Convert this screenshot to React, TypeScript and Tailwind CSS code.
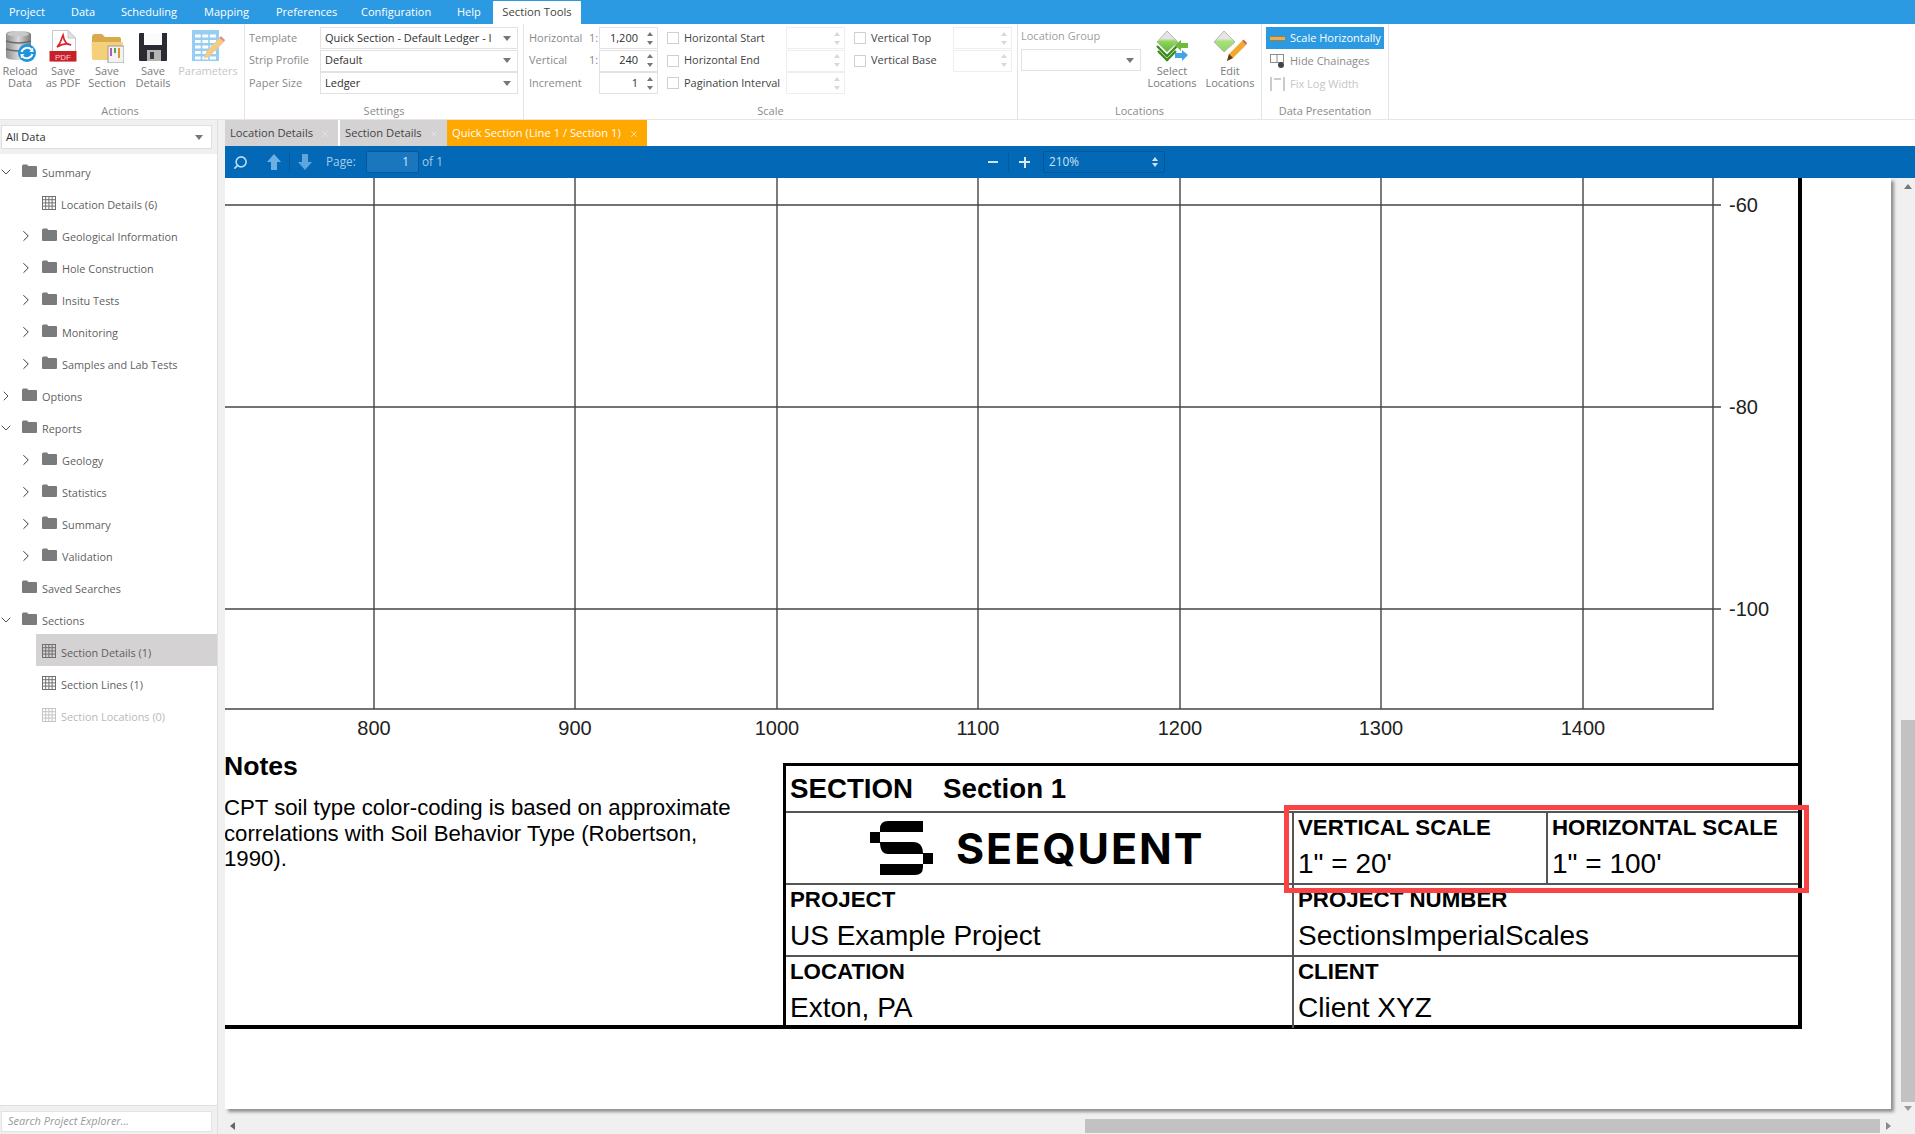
import { ChevronDown, ChevronRight, Search, X } from 'lucide-react'

type TreeItem = {
  label: string
  level: 0 | 1
  open?: boolean
  icon: 'folder' | 'grid'
  selected?: boolean
  dim?: boolean
}

const menu = [
  { label: 'Project', w: 'w-[62px]' },
  { label: 'Data', w: 'w-[50px]' },
  { label: 'Scheduling', w: 'w-[83px]' },
  { label: 'Mapping', w: 'w-[72px]' },
  { label: 'Preferences', w: 'w-[85px]' },
  { label: 'Configuration', w: 'w-[96px]' },
  { label: 'Help', w: 'w-[36px]' },
]

const tree: TreeItem[] = [
  { label: 'Summary', level: 0, open: true, icon: 'folder' },
  { label: 'Location Details (6)', level: 1, icon: 'grid' },
  { label: 'Geological Information', level: 1, open: false, icon: 'folder' },
  { label: 'Hole Construction', level: 1, open: false, icon: 'folder' },
  { label: 'Insitu Tests', level: 1, open: false, icon: 'folder' },
  { label: 'Monitoring', level: 1, open: false, icon: 'folder' },
  { label: 'Samples and Lab Tests', level: 1, open: false, icon: 'folder' },
  { label: 'Options', level: 0, open: false, icon: 'folder' },
  { label: 'Reports', level: 0, open: true, icon: 'folder' },
  { label: 'Geology', level: 1, open: false, icon: 'folder' },
  { label: 'Statistics', level: 1, open: false, icon: 'folder' },
  { label: 'Summary', level: 1, open: false, icon: 'folder' },
  { label: 'Validation', level: 1, open: false, icon: 'folder' },
  { label: 'Saved Searches', level: 0, icon: 'folder' },
  { label: 'Sections', level: 0, open: true, icon: 'folder' },
  { label: 'Section Details (1)', level: 1, icon: 'grid', selected: true },
  { label: 'Section Lines (1)', level: 1, icon: 'grid' },
  { label: 'Section Locations (0)', level: 1, icon: 'grid', dim: true },
]

function FolderIcon() {
  return (
    <svg width="15" height="13" viewBox="0 0 15 13" className="shrink-0 mt-px">
      <path d="M0 2 Q0 0.5 1.5 0.5 H5 L6.5 2 H14 Q15 2 15 3 V12 Q15 13 14 13 H1 Q0 13 0 12 Z" fill="#7b7b7b" />
    </svg>
  )
}

function GridIcon({ dim }: { dim?: boolean }) {
  const c = dim ? '#c4c4c4' : '#6f6f6f'
  return (
    <svg width="14" height="14" viewBox="0 0 14 14" className="shrink-0 mt-px" fill="none" stroke={c} strokeWidth="1">
      <rect x="0.5" y="0.5" width="13" height="13" />
      <path d="M0 3.7H14M0 6.9H14M0 10.1H14M3.7 0V14M6.9 0V14M10.1 0V14" />
    </svg>
  )
}

function ReloadIcon() {
  return (
    <svg width="31" height="32" viewBox="0 0 31 32">
      <defs>
        <linearGradient id="dbg" x1="0" x2="1" y1="0" y2="0">
          <stop offset="0" stopColor="#8d8d8d" />
          <stop offset="0.5" stopColor="#d9d9d9" />
          <stop offset="1" stopColor="#7a7a7a" />
        </linearGradient>
      </defs>
      <path d="M1 4 Q1 1 12 1 Q25 1 26 4 V27 Q25 30 13 30 Q1 30 1 27 Z" fill="url(#dbg)" />
      <path d="M1 11 Q13 15 26 11 M1 19 Q13 23 26 19" stroke="#6a6a6a" strokeWidth="1.4" fill="none" />
      <ellipse cx="13" cy="4" rx="11" ry="2.4" fill="#c9c9c9" />
      <circle cx="22" cy="23" r="9" fill="#1b93df" />
      <path d="M16.5 22 A6 6 0 0 1 26.5 19.5 M27.5 24 A6 6 0 0 1 17.5 26.5" stroke="#fff" strokeWidth="2" fill="none" />
      <path d="M24.5 22 L28.5 22 L28 17.5 Z M19.5 24 L15.5 24 L16 28.5 Z" fill="#fff" />
    </svg>
  )
}

function PdfIcon() {
  return (
    <svg width="28" height="32" viewBox="0 0 28 32">
      <path d="M3.5 0.5 H19 L26.5 8 V31 H3.5 Z" fill="#fff" stroke="#c8c8c8" />
      <path d="M19 0.5 V8 H26.5 Z" fill="#e2e2e2" stroke="#c8c8c8" />
      <path d="M14 5 C12 9 13 12 8 17 C13 14 18 13 22 15 C18 15 15 11 14 5 Z" fill="none" stroke="#d8232a" strokeWidth="1.6" />
      <rect x="0.5" y="21" width="27" height="10.5" fill="#c9202a" />
      <text x="14" y="29.5" textAnchor="middle" fontSize="8" fill="#f5d5d5" fontFamily="Liberation Sans, sans-serif">PDF</text>
    </svg>
  )
}

function SectionIcon() {
  return (
    <svg width="33" height="30" viewBox="0 0 33 30" className="mt-[3px]">
      <path d="M1 4 Q1 1 4 1 H11 L14 4 H28 Q30 4 30 6 V10 H1 Z" fill="#d9a94e" />
      <path d="M0.5 9 H32 L30 26 Q30 27 28 27 H3 Q1 27 1 26 Z" fill="#f6cf7a" />
      <rect x="17" y="13" width="16" height="17" fill="#f2f2f2" stroke="#9a9a9a" />
      <path d="M20 15 V23" stroke="#b15bb0" strokeWidth="2" />
      <path d="M24 15 V20" stroke="#59a14f" strokeWidth="2" />
      <path d="M28 15 V25" stroke="#d49a2c" strokeWidth="2" />
    </svg>
  )
}

function FloppyIcon() {
  return (
    <svg width="30" height="30" viewBox="0 0 30 30" className="mt-[2px]">
      <path d="M1 2 Q1 1 2 1 H29 V28 Q29 29 28 29 H2 Q1 29 1 28 Z" fill="#2b2b33" />
      <rect x="6" y="1" width="18" height="12" fill="#fbfbfb" />
      <rect x="9" y="18" width="14" height="11" fill="#b5b5b5" />
      <rect x="12" y="20" width="4" height="7" fill="#3a3a3a" />
    </svg>
  )
}

function ParametersIcon() {
  return (
    <svg width="33" height="32" viewBox="0 0 33 32" opacity="0.7">
      <rect x="0" y="0" width="27" height="31" fill="#69b9ee" />
      <path d="M3 6H24M3 11.5H24M3 17H24M3 22.5H24M3 28H24" stroke="#fff" strokeWidth="3" />
      <path d="M9.5 3V30M17 3V30" stroke="#69b9ee" strokeWidth="1.6" />
      <path d="M12 29 L14 22 L27 8 L32 12 L18 26 Z" fill="#f0b458" />
      <path d="M27 8 L29 6 L33 10 L32 12 Z" fill="#d06a4a" />
    </svg>
  )
}

function SelectLocationsIcon() {
  return (
    <svg width="33" height="32" viewBox="0 0 33 32">
      <defs>
        <linearGradient id="dia" x1="0" x2="0" y1="0" y2="1">
          <stop offset="0.35" stopColor="#e4e4e4" />
          <stop offset="0.5" stopColor="#8fd65a" />
          <stop offset="1" stopColor="#5cb82f" />
        </linearGradient>
      </defs>
      <path d="M11 1 L22 12 L11 22 L1 12 Z" fill="url(#dia)" stroke="#b8b8b8" />
      <path d="M1 16 L11 26 L21 16 M2 21 L11 30 L20 21" stroke="#3d8c1f" strokeWidth="2.4" fill="none" />
      <path d="M19 15 L25 10 V13 H32 V18 H25 V21 Z" fill="#6fbb3a" />
      <path d="M32 25 L26 20 V23 H19 V28 H26 V31 Z" fill="#3fa4e8" />
    </svg>
  )
}

function EditLocationsIcon() {
  return (
    <svg width="34" height="32" viewBox="0 0 34 32">
      <path d="M11 1 L22 12 L11 22 L1 12 Z" fill="url(#dia2)" stroke="#b8b8b8" />
      <defs>
        <linearGradient id="dia2" x1="0" x2="0" y1="0" y2="1">
          <stop offset="0.35" stopColor="#e6e6e6" />
          <stop offset="0.5" stopColor="#a8e07c" />
          <stop offset="1" stopColor="#8fd65a" />
        </linearGradient>
      </defs>
      <path d="M14 31 L16 24 L29 11 L33 15 L20 28 Z" fill="#f0a92f" />
      <path d="M14 31 L16 24 L20 28 Z" fill="#5a3d1c" />
      <path d="M29 11 L30.5 9.5 L34 13 L33 15 Z" fill="#d2604a" />
    </svg>
  )
}

function Caret({ light }: { light?: boolean }) {
  return (
    <span className={`w-0 h-0 border-x-[4px] border-x-transparent border-t-[5px] ${light ? 'border-t-[#c4c4c4]' : 'border-t-[#777777]'}`} />
  )
}

function RibbonButton({ icon, lines, w, dim }: { icon: React.ReactNode; lines: string[]; w: string; dim?: boolean }) {
  return (
    <div className={`${w} shrink-0 flex flex-col items-center pt-[6px] leading-[12px] ${dim ? 'text-[#c6c6c6]' : 'text-[#7a7a7a]'}`}>
      <div className="h-[35px] flex items-start justify-center">{icon}</div>
      {lines.map((l) => (
        <div key={l}>{l}</div>
      ))}
    </div>
  )
}

function Group({ w, label, labelClass, children }: { w: string; label: string; labelClass?: string; children: React.ReactNode }) {
  return (
    <div className={`${w} shrink-0 h-full flex flex-col border-r border-[#e3e3e3]`}>
      <div className="flex-1 min-h-0">{children}</div>
      <div className={`h-4 leading-4 text-center text-[#8a8a8a] ${labelClass ?? ''}`}>{label}</div>
    </div>
  )
}

function Combo({ text }: { text: string }) {
  return (
    <div className="h-[22px] w-[198px] flex items-center justify-between border border-[#e2e2e2] bg-white pl-1 pr-[6px] text-[#2f2f2f] font-medium">
      <span className="whitespace-nowrap">{text}</span>
      <Caret />
    </div>
  )
}

function Spinner({ value, disabled }: { value?: string; disabled?: boolean }) {
  return (
    <div className={`h-[22px] w-[59px] flex items-center justify-end border ${disabled ? 'border-[#eeeeee]' : 'border-[#e2e2e2]'} text-[#2f2f2f] font-medium`}>
      <span className="pr-[9px]">{value}</span>
      <span className="flex flex-col gap-[5px] pr-1">
        <span className={`w-0 h-0 border-x-[3px] border-x-transparent border-b-[4px] ${disabled ? 'border-b-[#d8d8d8]' : 'border-b-[#777777]'}`} />
        <span className={`w-0 h-0 border-x-[3px] border-x-transparent border-t-[4px] ${disabled ? 'border-t-[#d8d8d8]' : 'border-t-[#777777]'}`} />
      </span>
    </div>
  )
}

function Check({ label }: { label: string }) {
  return (
    <>
      <div className="flex justify-end items-center">
        <span className="w-3 h-3 border border-[#d0d0d0] bg-white" />
      </div>
      <div className="pl-[5px] text-[#444444] flex items-center">{label}</div>
    </>
  )
}

function Ribbon() {
  return (
    <div className="h-24 flex bg-white text-[11px] border-b border-[#e6e6e6]">
      <Group w="w-[245px]" label="Actions" labelClass="pr-1">
        <div className="flex">
          <RibbonButton w="w-[40px]" icon={<ReloadIcon />} lines={['Reload', 'Data']} />
          <RibbonButton w="w-[46px]" icon={<PdfIcon />} lines={['Save', 'as PDF']} />
          <RibbonButton w="w-[42px]" icon={<SectionIcon />} lines={['Save', 'Section']} />
          <RibbonButton w="w-[50px]" icon={<FloppyIcon />} lines={['Save', 'Details']} />
          <RibbonButton w="w-[60px]" icon={<ParametersIcon />} lines={['Parameters']} dim />
        </div>
      </Group>

      <Group w="w-[279px]" label="Settings">
        <div className="grid grid-cols-[71px_198px] auto-rows-[22px] gap-y-[0.5px] pt-[3px] pl-1 items-center text-[#8a8a8a]">
          <span>Template</span>
          <Combo text="Quick Section - Default Ledger - I" />
          <span>Strip Profile</span>
          <Combo text="Default" />
          <span>Paper Size</span>
          <Combo text="Ledger" />
        </div>
      </Group>

      <Group w="w-[494px]" label="Scale">
        <div className="grid grid-cols-[60px_10px_59px_21px_107px_59px_21px_87px_59px] auto-rows-[22px] gap-y-[0.5px] pt-[3px] pl-[5px] items-stretch text-[#8a8a8a]">
          <span className="flex items-center">Horizontal</span>
          <span className="flex items-center">1:</span>
          <Spinner value="1,200" />
          <Check label="Horizontal Start" />
          <Spinner disabled />
          <Check label="Vertical Top" />
          <Spinner disabled />

          <span className="flex items-center">Vertical</span>
          <span className="flex items-center">1:</span>
          <Spinner value="240" />
          <Check label="Horizontal End" />
          <Spinner disabled />
          <Check label="Vertical Base" />
          <Spinner disabled />

          <span className="flex items-center col-span-2">Increment</span>
          <Spinner value="1" />
          <Check label="Pagination Interval" />
          <Spinner disabled />
        </div>
      </Group>

      <Group w="w-[244px]" label="Locations">
        <div className="flex">
          <div className="w-[125px] pl-[3px] pt-[2px] shrink-0">
            <div className="h-[19px] leading-[19px] text-[#a0a0a0]">Location Group</div>
            <div className="mt-[4px] h-[22px] w-[120px] flex items-center justify-end pr-[6px] border border-[#e2e2e2]">
              <Caret />
            </div>
          </div>
          <RibbonButton w="w-[58px]" icon={<SelectLocationsIcon />} lines={['Select', 'Locations']} />
          <RibbonButton w="w-[58px]" icon={<EditLocationsIcon />} lines={['Edit', 'Locations']} />
        </div>
      </Group>

      <Group w="w-[127px]" label="Data Presentation">
        <div className="pl-1 pt-[3px]">
          <div className="w-[118px] h-[22px] flex items-center bg-[#2b9ae3] text-white pl-1 gap-[5px]">
            <span className="w-[15px] h-[5px] bg-[#e0b05c] border-y border-[#a87f35]" />
            <span>Scale Horizontally</span>
          </div>
          <div className="w-[118px] h-[22px] mt-px flex items-center text-[#8a8a8a] pl-1 gap-[5px]">
            <svg width="15" height="16" viewBox="0 0 15 16" fill="none" stroke="#8d8d8d">
              <rect x="0.5" y="1.5" width="13" height="8" />
              <path d="M7 1.5V9.5" />
              <circle cx="11" cy="12" r="3" fill="#444444" stroke="none" />
            </svg>
            <span>Hide Chainages</span>
          </div>
          <div className="w-[118px] h-[22px] mt-px flex items-center text-[#c6c6c6] pl-1 gap-[5px]">
            <svg width="15" height="16" viewBox="0 0 15 16" fill="none" stroke="#bcbcbc" strokeWidth="1.5">
              <path d="M1 1V15M14 1V15M4 3H11" />
            </svg>
            <span>Fix Log Width</span>
          </div>
        </div>
      </Group>
      <div className="flex-1" />
    </div>
  )
}

function Sidebar() {
  return (
    <div className="w-[225px] shrink-0 flex bg-[#f0f0f0]">
      <div className="w-[218px] flex flex-col border-r border-[#dedede] text-[10.9px]">
        <div className="h-[33px] shrink-0 pt-[5px] pl-[1px]">
          <div className="h-6 w-[211px] flex items-center justify-between bg-white border border-[#dfdfdf] pl-1 pr-2 text-[#2f2f2f] text-[11px] font-medium">
            <span>All Data</span>
            <Caret />
          </div>
        </div>
        <div className="flex-1 bg-white border-t border-[#f0f0f0]">
          {tree.map((t, i) => (
            <div key={i} className="h-8 flex items-center">
              <div className={`${t.level === 1 ? 'w-[36px] pl-[17px]' : 'w-[16px] -ml-[2px] mr-[2px]'} shrink-0 h-full flex items-center mt-[4px] text-[#333333]`}>
                {t.open === true && <ChevronDown size={18} strokeWidth={1.3} />}
                {t.open === false && <ChevronRight size={18} strokeWidth={1.3} />}
              </div>
              <div className={`flex-1 h-full flex items-center pl-[6px] gap-[5px] ${t.selected ? 'bg-[#d4d2d3]' : ''} ${t.dim ? 'text-[#b9b9b9]' : 'text-[#5f5f5f]'}`}>
                {t.icon === 'folder' ? <FolderIcon /> : <GridIcon dim={t.dim} />}
                <span className="mt-[6px]">{t.label}</span>
              </div>
            </div>
          ))}
        </div>
        <div className="h-[29px] shrink-0 border-t border-[#e0e0e0] pt-[5px] pl-[1px]">
          <div className="h-[21px] w-[211px] flex items-center bg-white border border-[#e3e3e3] pl-[6px] italic text-[#999999] text-[11px]">
            Search Project Explorer...
          </div>
        </div>
      </div>
    </div>
  )
}

function DocTab({ label, w, active }: { label: string; w: string; active?: boolean }) {
  return (
    <div className={`${w} h-full shrink-0 flex items-center justify-between pl-[5px] pr-[8px] pt-px ${active ? 'bg-[#ffa800] text-white' : 'bg-[#d4d2d3] text-[#444444]'}`}>
      <span>{label}</span>
      <X size={10} strokeWidth={1.5} className={active ? 'text-white' : 'text-[#eeeeee]'} />
    </div>
  )
}

function ArrowIcon({ down }: { down?: boolean }) {
  return (
    <svg width="14" height="16" viewBox="0 0 14 16" className={down ? 'rotate-180' : ''}>
      <path d="M7 0 L14 8 H10 V16 H4 V8 H0 Z" fill={down ? '#5fa6dc' : '#6cb0e2'} />
    </svg>
  )
}

function Toolbar() {
  return (
    <div className="h-8 shrink-0 flex items-center bg-[#0368b6] text-[11.8px] text-[#a6cdea]">
      <Search size={15} strokeWidth={2.6} className="ml-[8px] -scale-x-100 text-[#b7dcf5]" />
      <div className="ml-[19px]"><ArrowIcon /></div>
      <div className="ml-[8px] w-px h-5 bg-[#035a9e]" />
      <div className="ml-[8px]"><ArrowIcon down /></div>
      <span className="ml-[14px] w-[31px]">Page:</span>
      <div className="ml-[9px] w-[53px] h-[22px] flex items-center justify-end pr-[9px] bg-[#1a76bf] border border-[#04589a] rounded-[2px] text-[#d5e8f6]">1</div>
      <span className="ml-[3px] w-[22px] whitespace-nowrap">of 1</span>
      <span className="ml-[544px] w-[10px] h-[2px] bg-[#cfe3f2]" />
      <div className="ml-[10px] w-px h-5 bg-[#035a9e]" />
      <span className="ml-[10px] relative w-[11px] h-[11px] flex items-center justify-center">
        <span className="w-[11px] h-[2px] bg-[#d9eaf6]" />
        <span className="absolute w-[2px] h-[11px] bg-[#d9eaf6]" />
      </span>
      <div className="ml-[13px] w-[122px] h-[22px] flex items-center justify-between pl-[5px] pr-[6px] border border-[#04589a] rounded-[2px] text-[#cfe3f2]">
        <span>210%</span>
        <span className="flex flex-col gap-[2px]">
          <span className="w-0 h-0 border-x-[3px] border-x-transparent border-b-[4px] border-b-[#cfe3f2]" />
          <span className="w-0 h-0 border-x-[3px] border-x-transparent border-t-[4px] border-t-[#cfe3f2]" />
        </span>
      </div>
    </div>
  )
}

const xTicks = [
  { x: 149, label: '800' },
  { x: 350, label: '900' },
  { x: 552, label: '1000' },
  { x: 753, label: '1100' },
  { x: 955, label: '1200' },
  { x: 1156, label: '1300' },
  { x: 1358, label: '1400' },
]

const yTicks = [
  { y: 27, label: '-60' },
  { y: 229, label: '-80' },
  { y: 431, label: '-100' },
]

function Chart() {
  return (
    <svg width="1573" height="585" viewBox="0 0 1573 585" className="block shrink-0">
      {xTicks.map((t) => (
        <g key={t.label}>
          <line x1={t.x} x2={t.x} y1="0" y2="531" stroke="#444444" strokeWidth="1.4" />
          <text x={t.x} y="557" textAnchor="middle" fontSize="20" fill="#222222" fontFamily="Liberation Sans, sans-serif">{t.label}</text>
        </g>
      ))}
      <line x1="1488" x2="1488" y1="0" y2="532" stroke="#444444" strokeWidth="1.4" />
      <line x1="0" x2="1488" y1="531" y2="531" stroke="#444444" strokeWidth="1.4" />
      {yTicks.map((t) => (
        <g key={t.label}>
          <line x1="0" x2="1496" y1={t.y} y2={t.y} stroke="#444444" strokeWidth="1.4" />
          <text x="1504" y={t.y + 7} fontSize="20" fill="#222222" fontFamily="Liberation Sans, sans-serif">{t.label}</text>
        </g>
      ))}
    </svg>
  )
}

function Cell({ label, value, w }: { label: string; value: string; w: string }) {
  return (
    <div className={`${w} h-full pl-[4px] overflow-hidden`}>
      <div className="h-[29px] leading-[29px] text-[22.3px] font-bold">{label}</div>
      <div className="h-[43px] leading-[43px] text-[28px]">{value}</div>
    </div>
  )
}

function TitleBlock() {
  return (
    <div className="relative w-[1015px] h-full border-t-[3px] border-l-[3px] border-black text-black font-['Liberation_Sans',Arial,sans-serif]">
      <div className="h-[47px] flex items-center pl-[4px] border-b-2 border-[#555555] text-[27.7px] font-bold">
        <span>SECTION</span>
        <span className="ml-[30px]">Section 1</span>
      </div>
      <div className="h-[72px] flex border-b-2 border-[#555555]">
        <div className="w-[508px] h-full flex items-center border-r-2 border-[#555555] pl-[84px]">
          <svg width="63" height="54" viewBox="0 0 63 54" className="shrink-0">
            <path d="M10 12 V8 Q10 0 18 0 H53 V11 H10 Z" fill="#000" />
            <path d="M0 11 H10 V22 H0 Z" fill="#000" />
            <path d="M10 21 H43 Q53 21 53 33 H18 Q10 33 10 21 Z" fill="#000" />
            <path d="M53 32 H63 V43 H53 Z" fill="#000" />
            <path d="M10 43 H53 V46 Q53 54 45 54 H10 Z" fill="#000" />
          </svg>
          <span className="ml-[23px] text-[43px] leading-none font-bold tracking-[0.045em] font-['Inter',sans-serif]">SEEQUENT</span>
        </div>
        <div className="w-[254px] h-full border-r-2 border-[#555555]">
          <Cell label="VERTICAL SCALE" value={'1" = 20\''} w="w-full" />
        </div>
        <Cell label="HORIZONTAL SCALE" value={'1" = 100\''} w="flex-1" />
      </div>
      <div className="h-[72px] flex border-b-2 border-[#555555]">
        <div className="w-[508px] h-full border-r-2 border-[#555555]">
          <Cell label="PROJECT" value="US Example Project" w="w-full" />
        </div>
        <Cell label="PROJECT NUMBER" value="SectionsImperialScales" w="flex-1" />
      </div>
      <div className="h-[71px] flex">
        <div className="w-[508px] h-full border-r-2 border-[#555555]">
          <Cell label="LOCATION" value="Exton, PA" w="w-full" />
        </div>
        <Cell label="CLIENT" value="Client XYZ" w="flex-1" />
      </div>
      {/* annotation around the scale cells */}
      <div className="absolute left-[498px] top-[39px] w-[525px] h-[88px] border-[5px] border-[#f94446]" />
    </div>
  )
}

function ReportPage() {
  return (
    <div className="flex-1 min-h-0 bg-white overflow-hidden shadow-[3px_3px_3px_rgba(0,0,0,0.4)]">
      <div className="w-[1577px] h-[851px] flex flex-col border-r-4 border-b-4 border-black">
        <Chart />
        <div className="flex flex-1 min-h-0 font-['Liberation_Sans',Arial,sans-serif]">
          <div className="w-[558px] shrink-0 text-black">
            <div className="-ml-px mt-[-15px] h-[36px] leading-[36px] text-[26.6px] font-bold">Notes</div>
            <div className="-ml-px mt-[11px] text-[22.2px] leading-[25.5px]">
              CPT soil type color-coding is based on approximate
              <br />
              correlations with Soil Behavior Type (Robertson,
              <br />
              1990).
            </div>
          </div>
          <TitleBlock />
        </div>
      </div>
    </div>
  )
}

export default function App() {
  return (
    <div className="w-[1915px] h-[1134px] overflow-hidden flex flex-col bg-[#f0f0f0] font-['Open_Sans','Noto_Sans',sans-serif]">
      <div className="h-6 shrink-0 flex items-end bg-[#2b9ae3] text-[11px] text-white">
        <div className="flex h-full items-center w-[493px] pl-[9px]">
          {menu.map((m) => (
            <span key={m.label} className={`${m.w} shrink-0`}>
              {m.label}
            </span>
          ))}
        </div>
        <div className="w-[88px] h-[23px] bg-white text-[#444444] flex items-center justify-center rounded-t-[1px] text-[11.3px]">Section Tools</div>
      </div>

      <Ribbon />

      <div className="flex-1 min-h-0 flex">
        <Sidebar />
        <div className="flex-1 min-w-0 flex flex-col text-[11.2px]">
          <div className="h-[26px] shrink-0 flex gap-0 bg-white">
            <DocTab label="Location Details" w="w-[113px] mr-[2px]" />
            <DocTab label="Section Details" w="w-[107px]" />
            <DocTab label="Quick Section (Line 1 / Section 1)" w="w-[200px]" active />
          </div>
          <Toolbar />
          <div className="flex-1 min-h-0 flex">
            <div className="flex-1 min-w-0 flex flex-col">
              <ReportPage />
              <div className="h-[25px] shrink-0 flex items-center pt-[9px]">
                <span className="ml-[5px] w-0 h-0 border-y-[4px] border-y-transparent border-r-[5px] border-r-[#666666]" />
                <div className="ml-[850px] w-[797px] h-[14px] bg-[#c2c2c2]" />
                <span className="ml-[6px] w-0 h-0 border-y-[4px] border-y-transparent border-l-[5px] border-l-[#8a8a8a]" />
              </div>
            </div>
            <div className="w-6 shrink-0 flex flex-col items-end">
              <span className="mt-[6px] mr-[3px] w-0 h-0 border-x-[4px] border-x-transparent border-b-[5px] border-b-[#777777]" />
              <div className="mt-[531px] w-[14px] h-[382px] bg-[#c2c2c2]" />
              <span className="mt-[4px] mr-[3px] w-0 h-0 border-x-[4px] border-x-transparent border-t-[5px] border-t-[#9a9a9a]" />
            </div>
          </div>
        </div>
      </div>
    </div>
  )
}
